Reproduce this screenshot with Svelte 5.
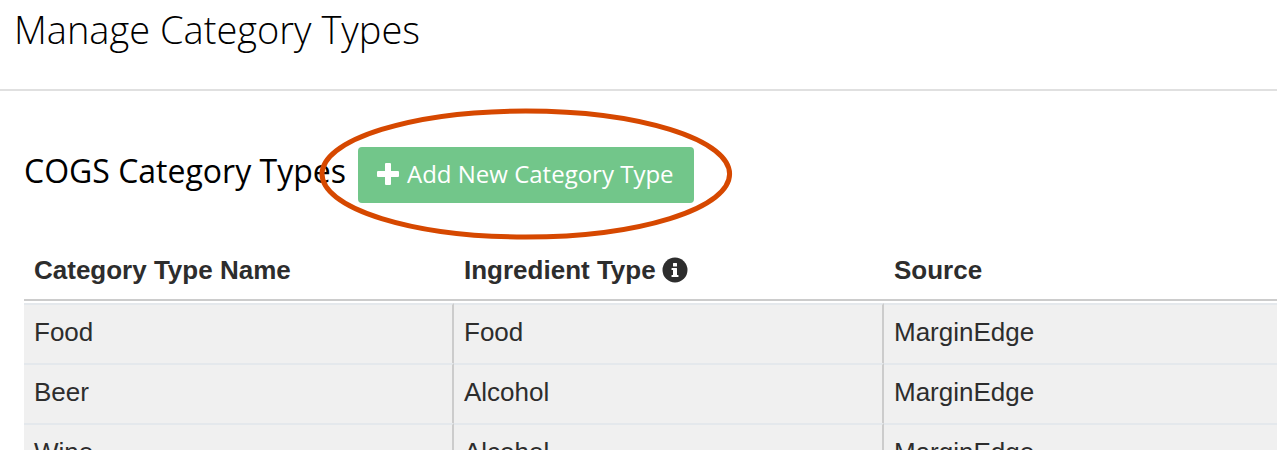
<script lang="ts">
  interface CategoryType {
    name: string;
    ingredientType: string;
    source: string;
  }

  const categoryTypes: CategoryType[] = [
    { name: 'Food', ingredientType: 'Food', source: 'MarginEdge' },
    { name: 'Beer', ingredientType: 'Alcohol', source: 'MarginEdge' },
    { name: 'Wine', ingredientType: 'Alcohol', source: 'MarginEdge' },
  ];
</script>

<header class="page-header">
  <h1>Manage Category Types</h1>
</header>

<main>
  <div class="section-head">
    <h2>COGS Category Types</h2>
    <div class="callout">
      <button class="add" type="button">
        <svg class="plus" viewBox="0 0 22 22" aria-hidden="true">
          <path
            d="M9 0h4Q14 0 14 1V8h7Q22 8 22 9v4Q22 14 21 14H14v7Q14 22 13 22h-4Q8 22 8 21V14H1Q0 14 0 13v-4Q0 8 1 8H8V1Q8 0 9 0z"
          />
        </svg>
        Add New Category Type
      </button>
      <svg class="ring" viewBox="0 0 414 132" preserveAspectRatio="none" aria-hidden="true">
        <ellipse cx="207" cy="66" rx="204" ry="63" />
      </svg>
    </div>
  </div>

  <table>
    <thead>
      <tr>
        <th scope="col">Category Type Name</th>
        <th scope="col">
          <span class="with-info">
            Ingredient Type
            <svg class="info" viewBox="0 0 26 26" aria-hidden="true">
              <circle cx="13" cy="13" r="12.500" />
              <path
                d="M11.500 6h3q.5 0 .5.5v2.500q0 .5-.5.5h-3q-.5 0-.5-.5V6.500q0-.5.5-.5zM10 11h4.500q.5 0 .5.5V18h1q.5 0 .5.5v1q0 .5-.5.5h-6q-.5 0-.5-.5v-1q0-.5.5-.5h1v-5h-1q-.5 0-.5-.5v-1q0-.5.5-.5z"
              />
            </svg>
          </span>
        </th>
        <th scope="col">Source</th>
      </tr>
    </thead>
    <tbody>
      {#each categoryTypes as type}
        <tr>
          <td>{type.name}</td>
          <td>{type.ingredientType}</td>
          <td>{type.source}</td>
        </tr>
      {/each}
    </tbody>
  </table>
</main>

<style>
  :global(body) {
    background: #fff;
    overflow: hidden;
  }
  .page-header {
    padding: 7px 14px 38px;
    border-bottom: 2px solid #e0e0e0;
  }
  h1,
  h2 {
    margin: 0;
    color: #000;
    font-family: 'Open Sans', sans-serif;
  }
  h1 {
    font-size: 38px;
    line-height: 44px;
    font-weight: 300;
  }
  h2 {
    font-size: 32px;
    line-height: 44px;
    font-weight: 400;
  }
  main {
    padding: 56px 0 0 24px;
  }
  .section-head {
    display: flex;
    align-items: baseline;
    gap: 12px;
    margin-bottom: 38px;
  }
  .callout {
    position: relative;
  }
  .add {
    display: flex;
    align-items: baseline;
    gap: 8px;
    padding: 11px 20px 13px 19px;
    border: 0;
    border-radius: 4px;
    background: #72c68a;
    color: #fff;
    font-family: 'Open Sans', sans-serif;
    font-size: 24px;
    line-height: 32px;
    white-space: nowrap;
    cursor: pointer;
  }
  .plus {
    width: 22px;
    height: 22px;
    align-self: center;
    fill: #fff;
  }
  /* highlight ring that sits over the button */
  .ring {
    position: absolute;
    top: -39px;
    left: -39px;
    width: calc(100% + 78px);
    height: calc(100% + 76px);
    pointer-events: none;
  }
  .ring ellipse {
    fill: none;
    stroke: #d64800;
    stroke-width: 5;
  }
  table {
    width: 100%;
    table-layout: fixed;
    border-spacing: 0;
    color: #2d2d2d;
    font-family: 'Liberation Sans', Arial, sans-serif;
    font-size: 26px;
    line-height: 30px;
    text-align: left;
  }
  th {
    padding: 14px 10px 16px;
    border-bottom: 2px solid #fff;
    box-shadow: inset 0 -2px #ccc;
    font-weight: 700;
  }
  th:not(:last-child) {
    width: 410px;
  }
  .with-info {
    display: flex;
    align-items: center;
    gap: 6px;
  }
  .info {
    width: 26px;
    height: 26px;
    fill: #2d2d2d;
  }
  .info path {
    fill: #fff;
  }
  td {
    padding: 12px 10px 16px;
    border-top: 2px solid #e4e8ec;
    background: #f0f0f0;
  }
  td:not(:last-child) {
    border-right: 2px solid #ccc;
  }
</style>
